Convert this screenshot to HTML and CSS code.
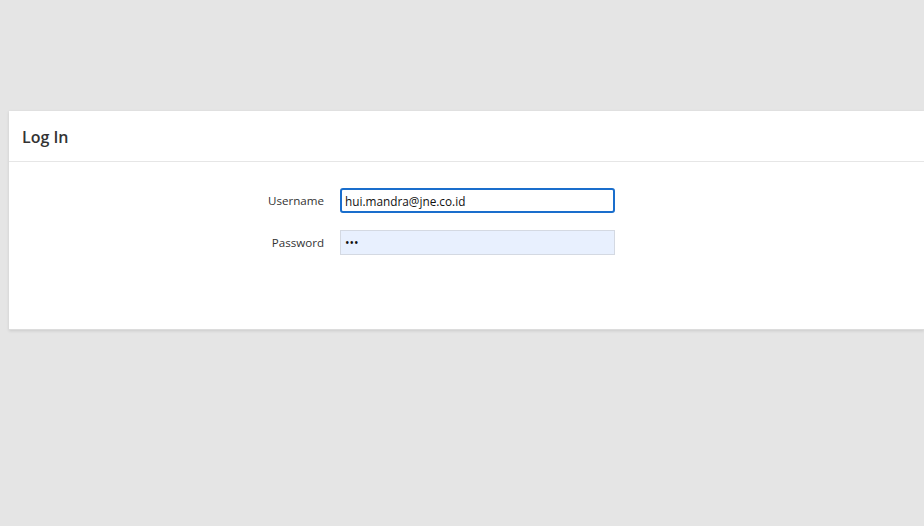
FILE: index.html
```html
<!DOCTYPE html>
<html>
<head>
<meta charset="utf-8">
<link rel="stylesheet" href="styles.css">
</head>
<body>
<div class="page">
  <div class="card">
    <div class="card-header">Log In</div>
    <div class="card-body">
      <div class="row">
        <label class="label">Username</label>
        <div class="input focused">hui.mandra@jne.co.id</div>
      </div>
      <div class="row">
        <label class="label">Password</label>
        <div class="input filled">&bull;&bull;&bull;</div>
      </div>
    </div>
  </div>
</div>
</body>
</html>
```
FILE: styles.css
```css
html, body {
  margin: 0;
  padding: 0;
  background: #e5e5e5;
  font-family: "Open Sans", "Noto Sans", sans-serif;
  color: #333;
}
.page {
  padding: 111px 0 0 9px;
  height: 526px;
  box-sizing: border-box;
  overflow: hidden;
}
.card {
  background: #fff;
  height: 219px;
  box-shadow: 0 1px 3px rgba(0,0,0,0.12);
  border-bottom: 1px solid #dcdcdc;
  box-sizing: border-box;
}
.card-header {
  height: 51px;
  box-sizing: border-box;
  border-bottom: 1px solid #e6e6e6;
  padding: 15px 0 0 13px;
  font-size: 16px;
  font-weight: 600;
  color: #333;
}
.card-body {
  padding: 26px 0 0 0;
  display: flex;
  flex-direction: column;
  gap: 17px;
}
.row {
  display: flex;
  align-items: center;
}
.label {
  width: 331px;
  text-align: right;
  font-size: 11.6px;
  color: #333;
  padding-right: 16px;
  box-sizing: border-box;
}
.input {
  width: 275px;
  height: 25px;
  box-sizing: border-box;
  font-size: 11.8px;
  display: flex;
  align-items: center;
  color: #111;
}
.focused {
  border: 2px solid #1a6ecc;
  border-radius: 3px;
  padding-left: 3px;
}
.filled {
  border: 1px solid #d4d9e2;
  background: #e8f0fe;
  padding-left: 4px;
  font-size: 12px;
}
```
